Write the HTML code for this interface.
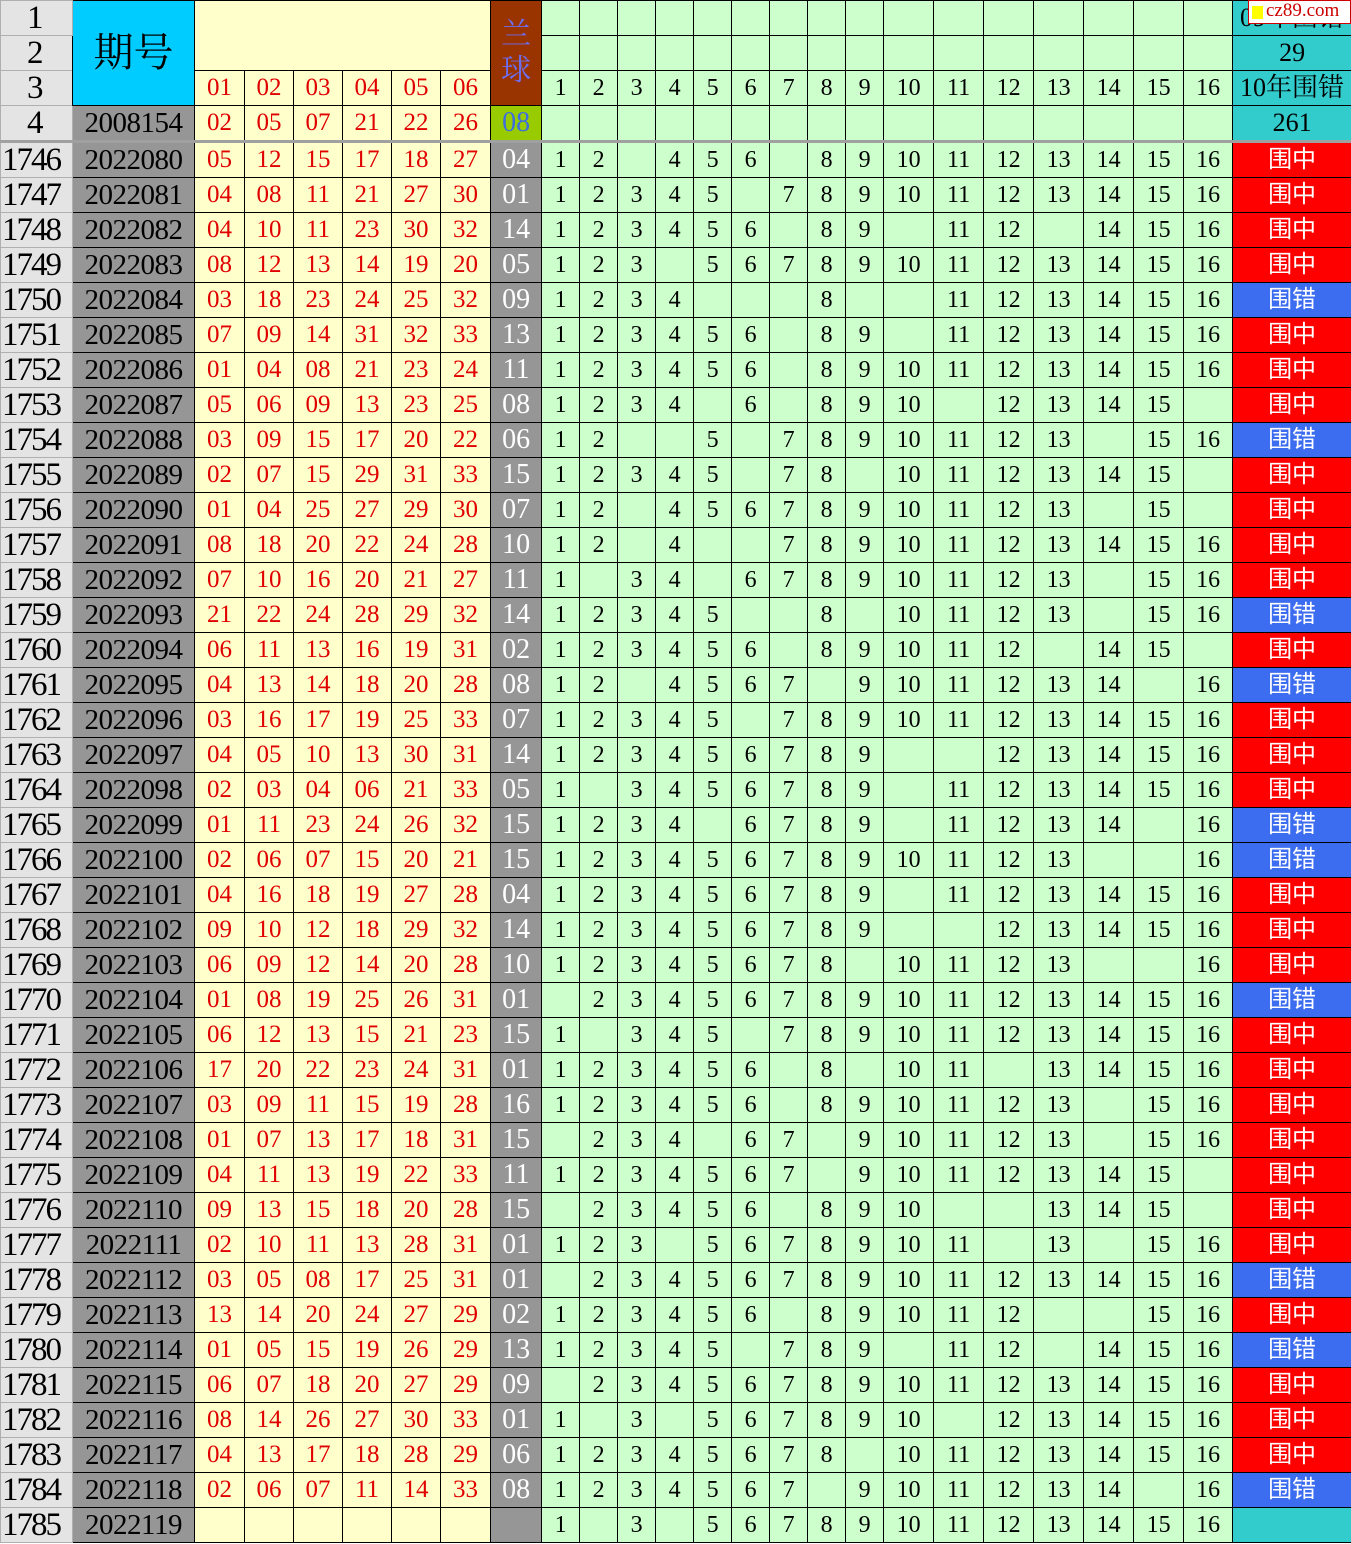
<!DOCTYPE html>
<html><head><meta charset="utf-8">
<style>
html,body{margin:0;padding:0;background:#fff;width:1351px;height:1544px;overflow:hidden;}
body{position:relative;}
table{border-collapse:collapse;table-layout:fixed;width:1351px;font-family:"Liberation Serif","Noto Serif CJK SC",serif;}
tr{height:35px;}
td{height:34px;max-height:34px;padding:0;border:1px solid #000;text-align:center;font-size:25px;line-height:34px;overflow:hidden;white-space:nowrap;color:#000;}
td:nth-child(1){background:#e4e4e4;border-color:#b0b0b0;font-size:33px;text-align:left;text-indent:1px;letter-spacing:-2px;}
td:nth-child(2){background:#969696;font-size:29px;letter-spacing:-0.5px;}
td:nth-child(n+3):nth-child(-n+8){background:#ffffcc;color:#e00000;font-size:25px;}
td:nth-child(9){background:#969696;color:#fff;font-size:28px;}
td:nth-child(n+10):nth-child(-n+25){background:#ccffcc;font-size:24px;}
td:nth-child(26){color:#fff;font-family:"Liberation Sans","Noto Sans CJK SC",sans-serif;font-size:24px;background:#ff0000;}
td.b{background:#3c6cf0 !important;}
td.t{background:#33cccc !important;color:#000 !important;font-family:"Liberation Serif","Noto Serif CJK SC",serif !important;font-size:26px !important;}
td.rn{background:#e4e4e4 !important;border-color:#b0b0b0 !important;font-size:33px !important;text-align:left;text-indent:26px !important;color:#000 !important;letter-spacing:0 !important;}
td.qh{background:#00ccff !important;font-size:40px !important;font-family:"Liberation Serif","Noto Serif CJK SC",serif;color:#000 !important;letter-spacing:0 !important;}
td.ye{background:#ffffcc !important;}
td.rd{background:#ffffcc !important;color:#e00000 !important;font-size:25px !important;text-indent:0 !important;text-align:center !important;letter-spacing:0 !important;}
td.lq{background:#993300 !important;color:#6e6ef0 !important;font-size:30px !important;line-height:36px;white-space:normal;}
td.gr{background:#ccffcc !important;color:#000 !important;font-size:24px !important;text-indent:0 !important;text-align:center !important;letter-spacing:0 !important;}
td.g8{background:#99cc00 !important;color:#3d6ee0 !important;font-size:28px;}
tr.s td{border-top:3px solid #a0a0a0;}
.logo{position:absolute;left:1248px;top:0;width:103px;height:24px;background:#fff;border:1px solid #c00;box-sizing:border-box;font-family:"Liberation Serif",serif;font-size:19px;line-height:20px;color:#c00;padding-left:17px;}
.logo:before{content:"";position:absolute;left:3px;top:5px;width:11px;height:13px;background:#ffff00;}
</style></head><body>
<table>
<colgroup><col style="width:72px"><col style="width:122px"><col style="width:50px"><col style="width:49px"><col style="width:49px"><col style="width:49px"><col style="width:49px"><col style="width:50px"><col style="width:51px"><col style="width:38px"><col style="width:38px"><col style="width:38px"><col style="width:38px"><col style="width:38px"><col style="width:38px"><col style="width:38px"><col style="width:38px"><col style="width:38px"><col style="width:50px"><col style="width:50px"><col style="width:50px"><col style="width:50px"><col style="width:50px"><col style="width:50px"><col style="width:49px"><col style="width:119px"></colgroup>
<tr><td class="rn">1</td><td class="qh" rowspan="3">期号</td><td class="ye" colspan="6" rowspan="2"></td><td class="lq" rowspan="3">兰<br>球</td><td class="gr"></td><td class="gr"></td><td class="gr"></td><td class="gr"></td><td class="gr"></td><td class="gr"></td><td class="gr"></td><td class="gr"></td><td class="gr"></td><td class="gr"></td><td class="gr"></td><td class="gr"></td><td class="gr"></td><td class="gr"></td><td class="gr"></td><td class="gr"></td><td class="t">09年围错</td></tr>
<tr><td class="rn">2</td><td class="gr"></td><td class="gr"></td><td class="gr"></td><td class="gr"></td><td class="gr"></td><td class="gr"></td><td class="gr"></td><td class="gr"></td><td class="gr"></td><td class="gr"></td><td class="gr"></td><td class="gr"></td><td class="gr"></td><td class="gr"></td><td class="gr"></td><td class="gr"></td><td class="t">29</td></tr>
<tr><td class="rn">3</td><td class="rd">01</td><td class="rd">02</td><td class="rd">03</td><td class="rd">04</td><td class="rd">05</td><td class="rd">06</td><td class="gr">1</td><td class="gr">2</td><td class="gr">3</td><td class="gr">4</td><td class="gr">5</td><td class="gr">6</td><td class="gr">7</td><td class="gr">8</td><td class="gr">9</td><td class="gr">10</td><td class="gr">11</td><td class="gr">12</td><td class="gr">13</td><td class="gr">14</td><td class="gr">15</td><td class="gr">16</td><td class="t">10年围错</td></tr>
<tr><td class="rn">4</td><td>2008154</td><td>02</td><td>05</td><td>07</td><td>21</td><td>22</td><td>26</td><td class="g8">08</td><td></td><td></td><td></td><td></td><td></td><td></td><td></td><td></td><td></td><td></td><td></td><td></td><td></td><td></td><td></td><td></td><td class="t">261</td></tr>
<tr class="s"><td>1746</td><td>2022080</td><td>05</td><td>12</td><td>15</td><td>17</td><td>18</td><td>27</td><td>04</td><td>1</td><td>2</td><td></td><td>4</td><td>5</td><td>6</td><td></td><td>8</td><td>9</td><td>10</td><td>11</td><td>12</td><td>13</td><td>14</td><td>15</td><td>16</td><td>围中</td></tr>
<tr><td>1747</td><td>2022081</td><td>04</td><td>08</td><td>11</td><td>21</td><td>27</td><td>30</td><td>01</td><td>1</td><td>2</td><td>3</td><td>4</td><td>5</td><td></td><td>7</td><td>8</td><td>9</td><td>10</td><td>11</td><td>12</td><td>13</td><td>14</td><td>15</td><td>16</td><td>围中</td></tr>
<tr><td>1748</td><td>2022082</td><td>04</td><td>10</td><td>11</td><td>23</td><td>30</td><td>32</td><td>14</td><td>1</td><td>2</td><td>3</td><td>4</td><td>5</td><td>6</td><td></td><td>8</td><td>9</td><td></td><td>11</td><td>12</td><td></td><td>14</td><td>15</td><td>16</td><td>围中</td></tr>
<tr><td>1749</td><td>2022083</td><td>08</td><td>12</td><td>13</td><td>14</td><td>19</td><td>20</td><td>05</td><td>1</td><td>2</td><td>3</td><td></td><td>5</td><td>6</td><td>7</td><td>8</td><td>9</td><td>10</td><td>11</td><td>12</td><td>13</td><td>14</td><td>15</td><td>16</td><td>围中</td></tr>
<tr><td>1750</td><td>2022084</td><td>03</td><td>18</td><td>23</td><td>24</td><td>25</td><td>32</td><td>09</td><td>1</td><td>2</td><td>3</td><td>4</td><td></td><td></td><td></td><td>8</td><td></td><td></td><td>11</td><td>12</td><td>13</td><td>14</td><td>15</td><td>16</td><td class="b">围错</td></tr>
<tr><td>1751</td><td>2022085</td><td>07</td><td>09</td><td>14</td><td>31</td><td>32</td><td>33</td><td>13</td><td>1</td><td>2</td><td>3</td><td>4</td><td>5</td><td>6</td><td></td><td>8</td><td>9</td><td></td><td>11</td><td>12</td><td>13</td><td>14</td><td>15</td><td>16</td><td>围中</td></tr>
<tr><td>1752</td><td>2022086</td><td>01</td><td>04</td><td>08</td><td>21</td><td>23</td><td>24</td><td>11</td><td>1</td><td>2</td><td>3</td><td>4</td><td>5</td><td>6</td><td></td><td>8</td><td>9</td><td>10</td><td>11</td><td>12</td><td>13</td><td>14</td><td>15</td><td>16</td><td>围中</td></tr>
<tr><td>1753</td><td>2022087</td><td>05</td><td>06</td><td>09</td><td>13</td><td>23</td><td>25</td><td>08</td><td>1</td><td>2</td><td>3</td><td>4</td><td></td><td>6</td><td></td><td>8</td><td>9</td><td>10</td><td></td><td>12</td><td>13</td><td>14</td><td>15</td><td></td><td>围中</td></tr>
<tr><td>1754</td><td>2022088</td><td>03</td><td>09</td><td>15</td><td>17</td><td>20</td><td>22</td><td>06</td><td>1</td><td>2</td><td></td><td></td><td>5</td><td></td><td>7</td><td>8</td><td>9</td><td>10</td><td>11</td><td>12</td><td>13</td><td></td><td>15</td><td>16</td><td class="b">围错</td></tr>
<tr><td>1755</td><td>2022089</td><td>02</td><td>07</td><td>15</td><td>29</td><td>31</td><td>33</td><td>15</td><td>1</td><td>2</td><td>3</td><td>4</td><td>5</td><td></td><td>7</td><td>8</td><td></td><td>10</td><td>11</td><td>12</td><td>13</td><td>14</td><td>15</td><td></td><td>围中</td></tr>
<tr><td>1756</td><td>2022090</td><td>01</td><td>04</td><td>25</td><td>27</td><td>29</td><td>30</td><td>07</td><td>1</td><td>2</td><td></td><td>4</td><td>5</td><td>6</td><td>7</td><td>8</td><td>9</td><td>10</td><td>11</td><td>12</td><td>13</td><td></td><td>15</td><td></td><td>围中</td></tr>
<tr><td>1757</td><td>2022091</td><td>08</td><td>18</td><td>20</td><td>22</td><td>24</td><td>28</td><td>10</td><td>1</td><td>2</td><td></td><td>4</td><td></td><td></td><td>7</td><td>8</td><td>9</td><td>10</td><td>11</td><td>12</td><td>13</td><td>14</td><td>15</td><td>16</td><td>围中</td></tr>
<tr><td>1758</td><td>2022092</td><td>07</td><td>10</td><td>16</td><td>20</td><td>21</td><td>27</td><td>11</td><td>1</td><td></td><td>3</td><td>4</td><td></td><td>6</td><td>7</td><td>8</td><td>9</td><td>10</td><td>11</td><td>12</td><td>13</td><td></td><td>15</td><td>16</td><td>围中</td></tr>
<tr><td>1759</td><td>2022093</td><td>21</td><td>22</td><td>24</td><td>28</td><td>29</td><td>32</td><td>14</td><td>1</td><td>2</td><td>3</td><td>4</td><td>5</td><td></td><td></td><td>8</td><td></td><td>10</td><td>11</td><td>12</td><td>13</td><td></td><td>15</td><td>16</td><td class="b">围错</td></tr>
<tr><td>1760</td><td>2022094</td><td>06</td><td>11</td><td>13</td><td>16</td><td>19</td><td>31</td><td>02</td><td>1</td><td>2</td><td>3</td><td>4</td><td>5</td><td>6</td><td></td><td>8</td><td>9</td><td>10</td><td>11</td><td>12</td><td></td><td>14</td><td>15</td><td></td><td>围中</td></tr>
<tr><td>1761</td><td>2022095</td><td>04</td><td>13</td><td>14</td><td>18</td><td>20</td><td>28</td><td>08</td><td>1</td><td>2</td><td></td><td>4</td><td>5</td><td>6</td><td>7</td><td></td><td>9</td><td>10</td><td>11</td><td>12</td><td>13</td><td>14</td><td></td><td>16</td><td class="b">围错</td></tr>
<tr><td>1762</td><td>2022096</td><td>03</td><td>16</td><td>17</td><td>19</td><td>25</td><td>33</td><td>07</td><td>1</td><td>2</td><td>3</td><td>4</td><td>5</td><td></td><td>7</td><td>8</td><td>9</td><td>10</td><td>11</td><td>12</td><td>13</td><td>14</td><td>15</td><td>16</td><td>围中</td></tr>
<tr><td>1763</td><td>2022097</td><td>04</td><td>05</td><td>10</td><td>13</td><td>30</td><td>31</td><td>14</td><td>1</td><td>2</td><td>3</td><td>4</td><td>5</td><td>6</td><td>7</td><td>8</td><td>9</td><td></td><td></td><td>12</td><td>13</td><td>14</td><td>15</td><td>16</td><td>围中</td></tr>
<tr><td>1764</td><td>2022098</td><td>02</td><td>03</td><td>04</td><td>06</td><td>21</td><td>33</td><td>05</td><td>1</td><td></td><td>3</td><td>4</td><td>5</td><td>6</td><td>7</td><td>8</td><td>9</td><td></td><td>11</td><td>12</td><td>13</td><td>14</td><td>15</td><td>16</td><td>围中</td></tr>
<tr><td>1765</td><td>2022099</td><td>01</td><td>11</td><td>23</td><td>24</td><td>26</td><td>32</td><td>15</td><td>1</td><td>2</td><td>3</td><td>4</td><td></td><td>6</td><td>7</td><td>8</td><td>9</td><td></td><td>11</td><td>12</td><td>13</td><td>14</td><td></td><td>16</td><td class="b">围错</td></tr>
<tr><td>1766</td><td>2022100</td><td>02</td><td>06</td><td>07</td><td>15</td><td>20</td><td>21</td><td>15</td><td>1</td><td>2</td><td>3</td><td>4</td><td>5</td><td>6</td><td>7</td><td>8</td><td>9</td><td>10</td><td>11</td><td>12</td><td>13</td><td></td><td></td><td>16</td><td class="b">围错</td></tr>
<tr><td>1767</td><td>2022101</td><td>04</td><td>16</td><td>18</td><td>19</td><td>27</td><td>28</td><td>04</td><td>1</td><td>2</td><td>3</td><td>4</td><td>5</td><td>6</td><td>7</td><td>8</td><td>9</td><td></td><td>11</td><td>12</td><td>13</td><td>14</td><td>15</td><td>16</td><td>围中</td></tr>
<tr><td>1768</td><td>2022102</td><td>09</td><td>10</td><td>12</td><td>18</td><td>29</td><td>32</td><td>14</td><td>1</td><td>2</td><td>3</td><td>4</td><td>5</td><td>6</td><td>7</td><td>8</td><td>9</td><td></td><td></td><td>12</td><td>13</td><td>14</td><td>15</td><td>16</td><td>围中</td></tr>
<tr><td>1769</td><td>2022103</td><td>06</td><td>09</td><td>12</td><td>14</td><td>20</td><td>28</td><td>10</td><td>1</td><td>2</td><td>3</td><td>4</td><td>5</td><td>6</td><td>7</td><td>8</td><td></td><td>10</td><td>11</td><td>12</td><td>13</td><td></td><td></td><td>16</td><td>围中</td></tr>
<tr><td>1770</td><td>2022104</td><td>01</td><td>08</td><td>19</td><td>25</td><td>26</td><td>31</td><td>01</td><td></td><td>2</td><td>3</td><td>4</td><td>5</td><td>6</td><td>7</td><td>8</td><td>9</td><td>10</td><td>11</td><td>12</td><td>13</td><td>14</td><td>15</td><td>16</td><td class="b">围错</td></tr>
<tr><td>1771</td><td>2022105</td><td>06</td><td>12</td><td>13</td><td>15</td><td>21</td><td>23</td><td>15</td><td>1</td><td></td><td>3</td><td>4</td><td>5</td><td></td><td>7</td><td>8</td><td>9</td><td>10</td><td>11</td><td>12</td><td>13</td><td>14</td><td>15</td><td>16</td><td>围中</td></tr>
<tr><td>1772</td><td>2022106</td><td>17</td><td>20</td><td>22</td><td>23</td><td>24</td><td>31</td><td>01</td><td>1</td><td>2</td><td>3</td><td>4</td><td>5</td><td>6</td><td></td><td>8</td><td></td><td>10</td><td>11</td><td></td><td>13</td><td>14</td><td>15</td><td>16</td><td>围中</td></tr>
<tr><td>1773</td><td>2022107</td><td>03</td><td>09</td><td>11</td><td>15</td><td>19</td><td>28</td><td>16</td><td>1</td><td>2</td><td>3</td><td>4</td><td>5</td><td>6</td><td></td><td>8</td><td>9</td><td>10</td><td>11</td><td>12</td><td>13</td><td></td><td>15</td><td>16</td><td>围中</td></tr>
<tr><td>1774</td><td>2022108</td><td>01</td><td>07</td><td>13</td><td>17</td><td>18</td><td>31</td><td>15</td><td></td><td>2</td><td>3</td><td>4</td><td></td><td>6</td><td>7</td><td></td><td>9</td><td>10</td><td>11</td><td>12</td><td>13</td><td></td><td>15</td><td>16</td><td>围中</td></tr>
<tr><td>1775</td><td>2022109</td><td>04</td><td>11</td><td>13</td><td>19</td><td>22</td><td>33</td><td>11</td><td>1</td><td>2</td><td>3</td><td>4</td><td>5</td><td>6</td><td>7</td><td></td><td>9</td><td>10</td><td>11</td><td>12</td><td>13</td><td>14</td><td>15</td><td></td><td>围中</td></tr>
<tr><td>1776</td><td>2022110</td><td>09</td><td>13</td><td>15</td><td>18</td><td>20</td><td>28</td><td>15</td><td></td><td>2</td><td>3</td><td>4</td><td>5</td><td>6</td><td></td><td>8</td><td>9</td><td>10</td><td></td><td></td><td>13</td><td>14</td><td>15</td><td></td><td>围中</td></tr>
<tr><td>1777</td><td>2022111</td><td>02</td><td>10</td><td>11</td><td>13</td><td>28</td><td>31</td><td>01</td><td>1</td><td>2</td><td>3</td><td></td><td>5</td><td>6</td><td>7</td><td>8</td><td>9</td><td>10</td><td>11</td><td></td><td>13</td><td></td><td>15</td><td>16</td><td>围中</td></tr>
<tr><td>1778</td><td>2022112</td><td>03</td><td>05</td><td>08</td><td>17</td><td>25</td><td>31</td><td>01</td><td></td><td>2</td><td>3</td><td>4</td><td>5</td><td>6</td><td>7</td><td>8</td><td>9</td><td>10</td><td>11</td><td>12</td><td>13</td><td>14</td><td>15</td><td>16</td><td class="b">围错</td></tr>
<tr><td>1779</td><td>2022113</td><td>13</td><td>14</td><td>20</td><td>24</td><td>27</td><td>29</td><td>02</td><td>1</td><td>2</td><td>3</td><td>4</td><td>5</td><td>6</td><td></td><td>8</td><td>9</td><td>10</td><td>11</td><td>12</td><td></td><td></td><td>15</td><td>16</td><td>围中</td></tr>
<tr><td>1780</td><td>2022114</td><td>01</td><td>05</td><td>15</td><td>19</td><td>26</td><td>29</td><td>13</td><td>1</td><td>2</td><td>3</td><td>4</td><td>5</td><td></td><td>7</td><td>8</td><td>9</td><td></td><td>11</td><td>12</td><td></td><td>14</td><td>15</td><td>16</td><td class="b">围错</td></tr>
<tr><td>1781</td><td>2022115</td><td>06</td><td>07</td><td>18</td><td>20</td><td>27</td><td>29</td><td>09</td><td></td><td>2</td><td>3</td><td>4</td><td>5</td><td>6</td><td>7</td><td>8</td><td>9</td><td>10</td><td>11</td><td>12</td><td>13</td><td>14</td><td>15</td><td>16</td><td>围中</td></tr>
<tr><td>1782</td><td>2022116</td><td>08</td><td>14</td><td>26</td><td>27</td><td>30</td><td>33</td><td>01</td><td>1</td><td></td><td>3</td><td></td><td>5</td><td>6</td><td>7</td><td>8</td><td>9</td><td>10</td><td></td><td>12</td><td>13</td><td>14</td><td>15</td><td>16</td><td>围中</td></tr>
<tr><td>1783</td><td>2022117</td><td>04</td><td>13</td><td>17</td><td>18</td><td>28</td><td>29</td><td>06</td><td>1</td><td>2</td><td>3</td><td>4</td><td>5</td><td>6</td><td>7</td><td>8</td><td></td><td>10</td><td>11</td><td>12</td><td>13</td><td>14</td><td>15</td><td>16</td><td>围中</td></tr>
<tr><td>1784</td><td>2022118</td><td>02</td><td>06</td><td>07</td><td>11</td><td>14</td><td>33</td><td>08</td><td>1</td><td>2</td><td>3</td><td>4</td><td>5</td><td>6</td><td>7</td><td></td><td>9</td><td>10</td><td>11</td><td>12</td><td>13</td><td>14</td><td></td><td>16</td><td class="b">围错</td></tr>
<tr><td>1785</td><td>2022119</td><td></td><td></td><td></td><td></td><td></td><td></td><td></td><td>1</td><td></td><td>3</td><td></td><td>5</td><td>6</td><td>7</td><td>8</td><td>9</td><td>10</td><td>11</td><td>12</td><td>13</td><td>14</td><td>15</td><td>16</td><td class="t"></td></tr>
</table>
<div class="logo">cz89.com</div>
</body></html>
